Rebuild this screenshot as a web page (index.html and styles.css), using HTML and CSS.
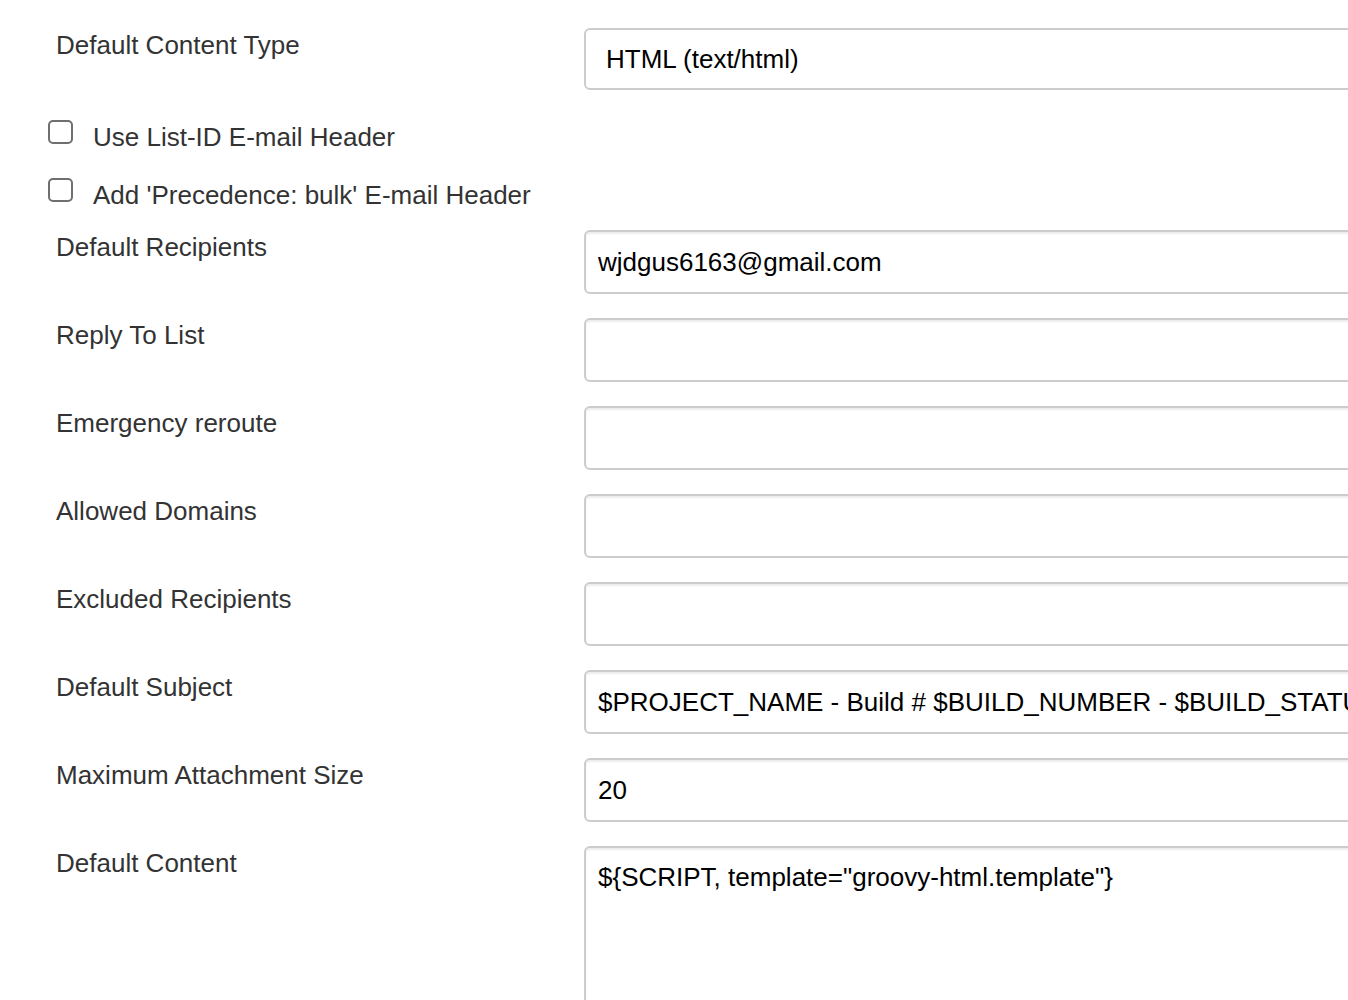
FILE: index.html
```html
<!DOCTYPE html>
<html lang="en">
<head>
<meta charset="utf-8">
<title>Extended E-mail Notification</title>
<link rel="stylesheet" href="styles.css">
</head>
<body>
<div class="form">
  <div class="row row-select">
    <div class="label">Default Content Type</div>
    <div class="field">
      <div class="select">HTML (text/html)</div>
    </div>
  </div>

  <label class="check-row first">
    <input type="checkbox" class="check">
    <span class="check-label">Use List-ID E-mail Header</span>
  </label>
  <label class="check-row second">
    <input type="checkbox" class="check">
    <span class="check-label">Add 'Precedence: bulk' E-mail Header</span>
  </label>

  <div class="row field-row top">
    <div class="label">Default Recipients</div>
    <div class="field"><input class="text" type="text" value="wjdgus6163@gmail.com"></div>
  </div>
  <div class="row field-row">
    <div class="label">Reply To List</div>
    <div class="field"><input class="text" type="text" value=""></div>
  </div>
  <div class="row field-row">
    <div class="label">Emergency reroute</div>
    <div class="field"><input class="text" type="text" value=""></div>
  </div>
  <div class="row field-row">
    <div class="label">Allowed Domains</div>
    <div class="field"><input class="text" type="text" value=""></div>
  </div>
  <div class="row field-row">
    <div class="label">Excluded Recipients</div>
    <div class="field"><input class="text" type="text" value=""></div>
  </div>
  <div class="row field-row">
    <div class="label">Default Subject</div>
    <div class="field"><input class="text" type="text" value="$PROJECT_NAME - Build # $BUILD_NUMBER - $BUILD_STATUS!"></div>
  </div>
  <div class="row field-row">
    <div class="label">Maximum Attachment Size</div>
    <div class="field"><input class="text" type="text" value="20"></div>
  </div>
  <div class="row field-row">
    <div class="label">Default Content</div>
    <div class="field"><textarea class="area">${SCRIPT, template="groovy-html.template"}</textarea></div>
  </div>
</div>
</body>
</html>
```

FILE: styles.css
```css
html, body {
  margin: 0;
  padding: 0;
  background: #ffffff;
}

body {
  width: 1348px;
  height: 1000px;
  overflow: hidden;
  font-family: "Liberation Sans", Arial, Helvetica, sans-serif;
  font-size: 26px;
  line-height: 37px;
  color: #333333;
}

.form {
  display: flex;
  flex-direction: column;
  padding-left: 48px;
  width: 1400px;
}

.row {
  display: grid;
  grid-template-columns: 536px 820px;
  align-items: start;
}

.label {
  padding-left: 8px;
  color: #333333;
  white-space: nowrap;
}

.row-select {
  margin-top: 28px;
}

.row-select .label {
  margin-top: -1px;
}

.select {
  box-sizing: border-box;
  height: 62px;
  border: 2px solid #cccccc;
  border-radius: 6px;
  padding: 0 20px;
  display: flex;
  align-items: center;
  color: #000000;
  background: #ffffff;
}

.check-row {
  display: flex;
  align-items: flex-start;
  gap: 20px;
  cursor: default;
}

.check-row.first {
  margin-top: 29px;
}

.check-row.second {
  margin-top: 21px;
}

.check {
  appearance: none;
  -webkit-appearance: none;
  box-sizing: border-box;
  width: 25px;
  height: 24px;
  margin: 1px 0 0 0;
  border: 2px solid #6f6f6f;
  border-radius: 5px;
  background: #ffffff;
  flex: none;
}

.check-label {
  color: #333333;
  white-space: nowrap;
}

.field-row {
  margin-top: 24px;
}

.field-row.top {
  margin-top: 16px;
}

.field-row .label {
  margin-top: -1px;
}

.text,
.area {
  box-sizing: border-box;
  display: block;
  width: 820px;
  margin: 0;
  border: 2px solid #cccccc;
  border-radius: 6px;
  box-shadow: inset 0 2px 2px rgba(0, 0, 0, 0.08);
  background: #ffffff;
  color: #000000;
  font-family: "Liberation Sans", Arial, Helvetica, sans-serif;
  font-size: 26px;
  line-height: 37px;
  outline: none;
}

.text {
  height: 64px;
  padding: 0 12px;
}

.area {
  height: 240px;
  padding: 11px 12px 9px;
  resize: none;
  overflow: hidden;
}
```
